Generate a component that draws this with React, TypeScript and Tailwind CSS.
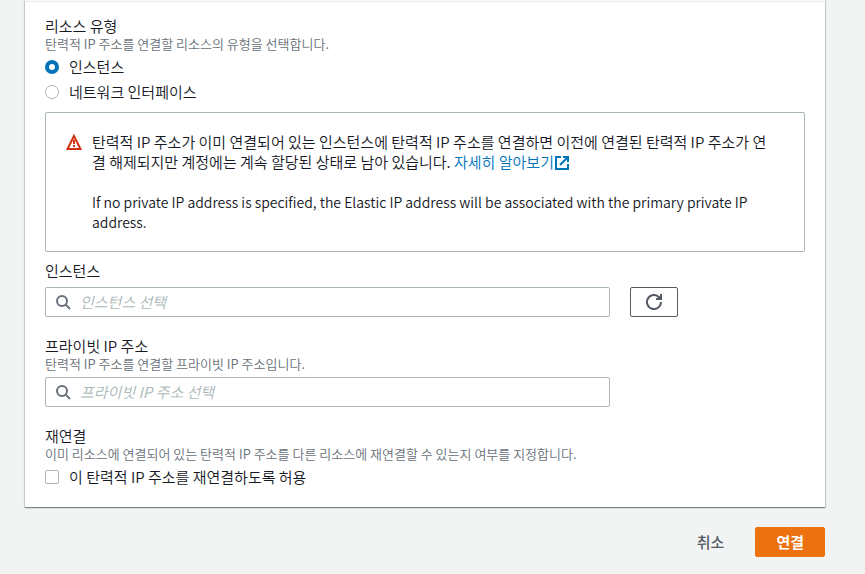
import React from 'react';

const resourceTypes = [
  { id: 'instance', label: '인스턴스' },
  { id: 'network-interface', label: '네트워크 인터페이스' },
];

const WarningIcon = () => (
  <svg className="w-4 h-4 shrink-0 mt-0.5" viewBox="0 0 16 16" fill="none" stroke="#d13212" strokeWidth="2" aria-hidden="true">
    <path d="M8 2L1.5 15h13L8 2z" />
    <path d="M8 6v4M8 11v2" />
  </svg>
);

const ExternalIcon = () => (
  <svg className="inline-block w-4 h-4 align-[-3px]" viewBox="0 0 16 16" fill="none" stroke="currentColor" strokeWidth="2" aria-hidden="true">
    <path d="M7 2H2v12h12V9" />
    <path d="M9 2h5v5M14 2L6 10" />
  </svg>
);

const SearchIcon = () => (
  <svg className="w-4 h-4 shrink-0" viewBox="0 0 16 16" fill="none" stroke="#687078" strokeWidth="2" aria-hidden="true">
    <circle cx="7" cy="7" r="5" />
    <path d="M10.6 10.6L15 15" />
  </svg>
);

const RefreshIcon = () => (
  <svg className="w-4 h-4" viewBox="0 0 16 16" fill="none" stroke="#545b64" strokeWidth="2" aria-hidden="true">
    <path d="M15 8a7 7 0 1 1-2-4.9L15 5" />
    <path d="M15 0v5h-5" />
    <path d="M12 3l2 1" />
  </svg>
);

const SearchField = ({ id, placeholder }: { id: string; placeholder: string }) => (
  <div className="flex items-center gap-[9px] w-[565px] max-w-full h-[30px] px-[9px] bg-white border border-[#aab7b8] rounded-xs">
    <SearchIcon />
    <input
      id={id}
      type="text"
      placeholder={placeholder}
      className="flex-1 min-w-0 bg-transparent outline-none placeholder:italic placeholder:text-[#aab7b8]"
    />
  </div>
);

const App: React.FC = () => {
  return (
    <div className="min-h-screen bg-[#f2f3f3] pl-[25px] pr-10 text-[15px] leading-5 font-[350] text-[#16191f] font-['Noto_Sans_CJK_KR',sans-serif]">
      {/* Settings panel */}
      <div className="bg-white border-t border-[#fafafa] shadow-[0_1px_1px_0_rgba(0,28,36,0.3),1px_1px_1px_0_rgba(0,28,36,0.15),-1px_1px_1px_0_rgba(0,28,36,0.15)]">
        <div className="border-t border-[#eaeded] px-5 pt-3.5 pb-5">
          {/* Resource type */}
          <fieldset>
            <legend>리소스 유형</legend>
            <p className="text-[13px] leading-4 text-[#687078]">탄력적 IP 주소를 연결할 리소스의 유형을 선택합니다.</p>
            <div className="flex flex-col gap-[5px] mt-[5px]">
              {resourceTypes.map((type, idx) => (
                <label key={type.id} className="flex items-center gap-2.5">
                  <input
                    type="radio"
                    name="resource-type"
                    value={type.id}
                    defaultChecked={idx === 0}
                    className="appearance-none w-3.5 h-3.5 bg-white rounded-full border border-[#aab7b8] checked:border-4 checked:border-[#0073bb]"
                  />
                  {type.label}
                </label>
              ))}
            </div>
          </fieldset>

          {/* Warning */}
          <div className="flex gap-2.5 mt-2.5 pl-5 pr-7 py-[19px] border border-[#aab7b8] rounded-xs">
            <WarningIcon />
            <div>
              <p>
                탄력적 IP 주소가 이미 연결되어 있는 인스턴스에 탄력적 IP 주소를 연결하면 이전에 연결된 탄력적 IP 주소가 연결 해제되지만 계정에는 계속 할당된 상태로 남아 있습니다.{' '}
                <a href="#" className="text-[#0073bb]">자세히 알아보기<ExternalIcon /></a>
              </p>
              <p className="mt-5 text-sm leading-5">
                If no private IP address is specified, the Elastic IP address will be associated with the primary private IP address.
              </p>
            </div>
          </div>

          {/* Instance */}
          <div className="mt-[9px]">
            <label htmlFor="instance" className="block">인스턴스</label>
            <div className="flex gap-5 mt-1.5">
              <SearchField id="instance" placeholder="인스턴스 선택" />
              <button type="button" aria-label="새로 고침" className="flex items-center justify-center w-12 h-[30px] shrink-0 bg-white border border-[#545b64] rounded-xs">
                <RefreshIcon />
              </button>
            </div>
          </div>

          {/* Private IP */}
          <div className="mt-[19px]">
            <label htmlFor="private-ip" className="block">프라이빗 IP 주소</label>
            <p className="mb-[5px] text-[13px] leading-4 text-[#687078]">탄력적 IP 주소를 연결할 프라이빗 IP 주소입니다.</p>
            <SearchField id="private-ip" placeholder="프라이빗 IP 주소 선택" />
          </div>

          {/* Reassociation */}
          <fieldset className="mt-[19px]">
            <legend>재연결</legend>
            <p className="text-[13px] leading-4 text-[#687078]">이미 리소스에 연결되어 있는 탄력적 IP 주소를 다른 리소스에 재연결할 수 있는지 여부를 지정합니다.</p>
            <label className="flex items-center gap-2.5 mt-[5px]">
              <input type="checkbox" className="appearance-none w-3.5 h-3.5 bg-white border border-[#aab7b8] rounded-xs checked:bg-[#0073bb]" />
              이 탄력적 IP 주소를 재연결하도록 허용
            </label>
          </fieldset>
        </div>
      </div>

      {/* Actions */}
      <div className="flex justify-end gap-2.5 py-5">
        <button type="button" className="h-[30px] px-5 border border-transparent rounded-xs text-[#545b64] font-medium">취소</button>
        <button type="button" className="h-[30px] px-5 border border-[#ec7211] rounded-xs bg-[#ec7211] text-white font-bold">연결</button>
      </div>
    </div>
  );
};

export default App;
